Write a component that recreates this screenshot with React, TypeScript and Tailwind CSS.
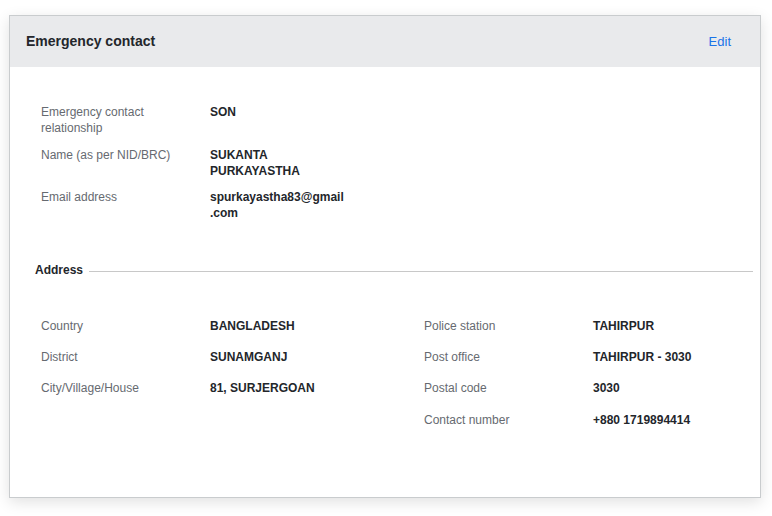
import { FC } from "react";

interface RowProps {
  label: string;
  value: string;
}

const InfoRow: FC<RowProps> = ({ label, value }) => {
  return (
    <div className="grid grid-cols-[169px_136px] leading-4 text-[12px]">
      <div className="text-[#666a70] pr-4">{label}</div>
      <div className="font-bold text-[#23262b] break-words">{value}</div>
    </div>
  );
};

const App: FC = () => {
  return (
    <div
      className="bg-white w-[772px] h-[516px] pl-[9px] pt-[15px]"
      style={{ fontFamily: '"Liberation Sans", Arial, sans-serif' }}
    >
      <div className="w-[752px] h-[483px] border border-[#c9ccce] bg-white shadow-[0_4px_14px_rgba(0,0,0,0.12)] flex flex-col">
        <div className="h-[51px] shrink-0 bg-[#e9eaec] flex items-center justify-between pl-4 pr-[29px]">
          <div className="text-[14px] font-bold text-[#23262b]">Emergency contact</div>
          <button className="text-[13px] text-[#1a73e8]">Edit</button>
        </div>

        <div className="pt-[37px] pl-[31px] flex flex-col gap-[10.5px]">
          <InfoRow label="Emergency contact relationship" value="SON" />
          <InfoRow label="Name (as per NID/BRC)" value="SUKANTA PURKAYASTHA" />
          <InfoRow label="Email address" value="spurkayastha83@gmail.com" />
        </div>

        <div className="mt-[41px] pl-[25px] pr-[7px] flex items-center gap-[6px]">
          <div className="text-[12px] font-bold text-[#23262b] leading-4">Address</div>
          <div className="flex-1 h-px bg-[#c8c8c8] mt-[3px]"></div>
        </div>

        <div className="mt-[40px] pl-[31px] grid grid-cols-[383px_1fr]">
          <div className="flex flex-col gap-[15.2px]">
            <InfoRow label="Country" value="BANGLADESH" />
            <InfoRow label="District" value="SUNAMGANJ" />
            <InfoRow label="City/Village/House" value="81, SURJERGOAN" />
          </div>
          <div className="flex flex-col gap-[15.2px]">
            <InfoRow label="Police station" value="TAHIRPUR" />
            <InfoRow label="Post office" value="TAHIRPUR - 3030" />
            <InfoRow label="Postal code" value="3030" />
            <InfoRow label="Contact number" value="+880 1719894414" />
          </div>
        </div>
      </div>
    </div>
  );
};

export default App;
